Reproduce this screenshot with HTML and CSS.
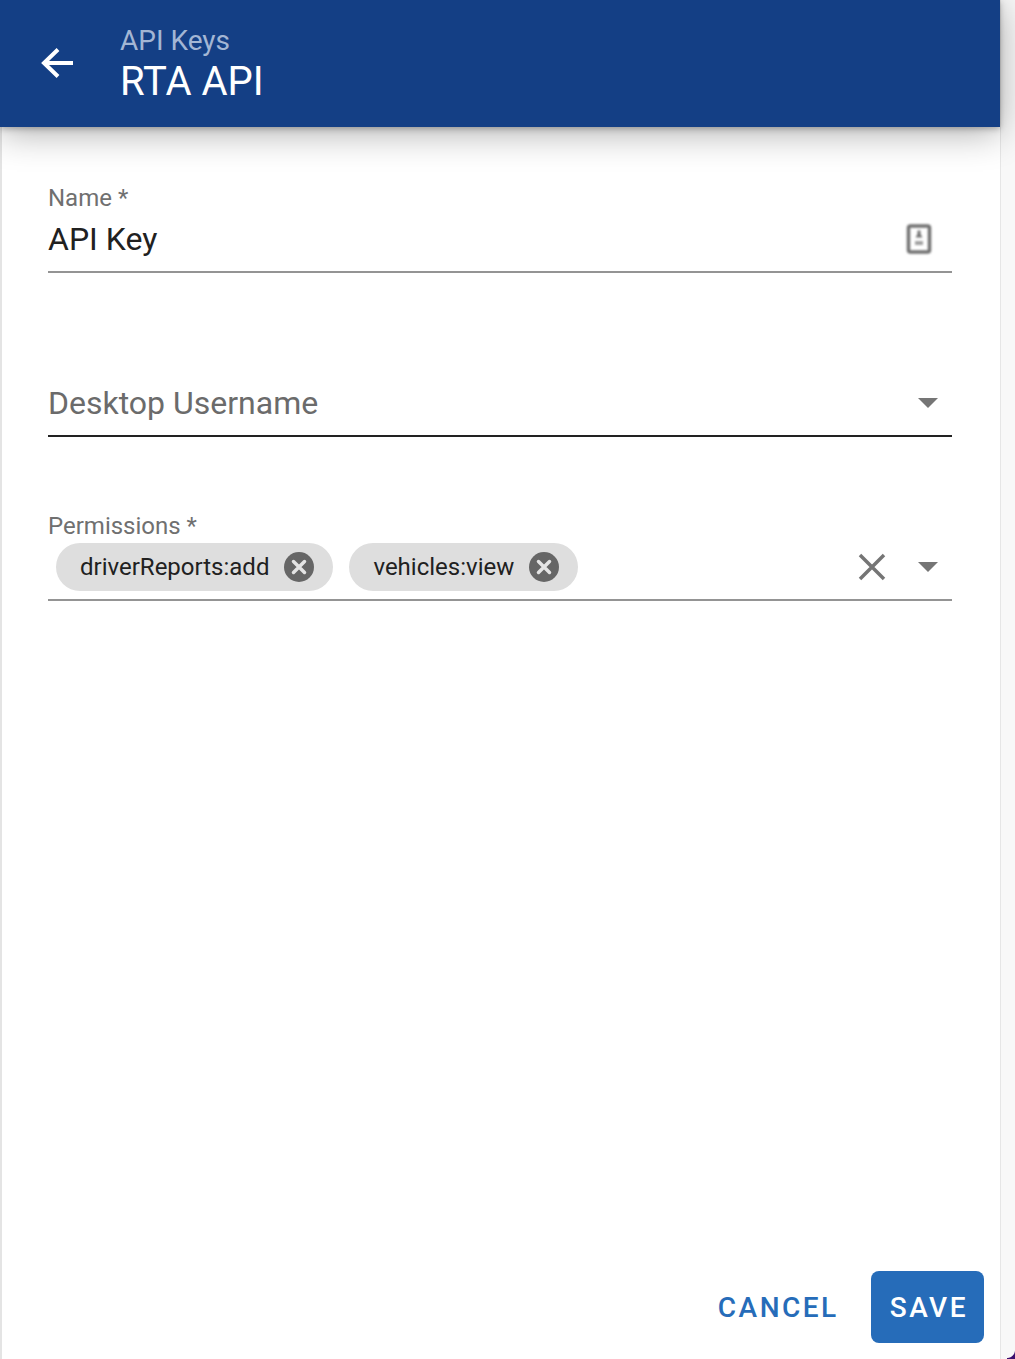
FILE: index.html
```html
<!DOCTYPE html>
<html lang="en">
<head>
    <meta charset="UTF-8">
    <meta name="viewport" content="width=device-width, initial-scale=1.0">
    <title>RTA API</title>
    <link rel="stylesheet" href="styles.css">
</head>
<body>
    <div class="page">
        <div class="panel">

            <!-- Header -->
            <header class="topbar">
                <svg class="back" width="48" height="48" viewBox="0 0 48 48">
                    <path d="M40 24H12M25 10.500L11 24l14 13.500" fill="none" stroke="#fff" stroke-width="4"/>
                </svg>
                <div class="titles">
                    <div class="crumb">API Keys</div>
                    <div class="title">RTA API</div>
                </div>
            </header>

            <!-- Form -->
            <main class="form">
                <div class="field field-name">
                    <label class="label">Name *</label>
                    <div class="control">
                        <span class="value">API Key</span>
                        <svg class="badge" width="26" height="32" viewBox="0 0 26 32">
                            <rect x="2.500" y="3" width="21" height="26" rx="2" fill="#fff" stroke="#707070" stroke-width="3.500"/>
                            <path d="M11.500 7.500h3V11l2 3.500h-7l2-3.500z" fill="#707070"/>
                            <rect x="9" y="18" width="8" height="4" fill="#a0a0a0"/>
                        </svg>
                    </div>
                </div>

                <div class="field field-user">
                    <div class="control control-focus">
                        <span class="placeholder">Desktop Username</span>
                        <span class="caret"></span>
                    </div>
                </div>

                <div class="field field-perms">
                    <label class="label">Permissions *</label>
                    <div class="control control-chips">
                        <span class="chip">driverReports:add
                            <svg class="chip-x" width="30" height="30" viewBox="0 0 30 30">
                                <circle cx="15" cy="15" r="15" fill="#666"/>
                                <path d="M9.500 9.500l11 11M20.500 9.500l-11 11" stroke="#e4e4e4" stroke-width="3.500" stroke-linecap="round"/>
                            </svg>
                        </span>
                        <span class="chip">vehicles:view
                            <svg class="chip-x" width="30" height="30" viewBox="0 0 30 30">
                                <circle cx="15" cy="15" r="15" fill="#666"/>
                                <path d="M9.500 9.500l11 11M20.500 9.500l-11 11" stroke="#e4e4e4" stroke-width="3.500" stroke-linecap="round"/>
                            </svg>
                        </span>
                        <svg class="clear" width="32" height="32" viewBox="0 0 32 32">
                            <path d="M4 4l24 24M28 4L4 28" stroke="#757575" stroke-width="3.500"/>
                        </svg>
                        <span class="caret"></span>
                    </div>
                </div>
            </main>

            <!-- Buttons -->
            <footer class="actions">
                <button class="btn btn-text">CANCEL</button>
                <button class="btn btn-save">SAVE</button>
            </footer>
        </div>
        <div class="corner"></div>
    </div>
</body>
</html>
```

FILE: styles.css
```css
* {
    box-sizing: border-box;
}

html, body {
    margin: 0;
    padding: 0;
}

body {
    font-family: Roboto, "Liberation Sans", sans-serif;
    background: #f8f8f8;
}

.page {
    position: relative;
    width: 1015px;
    height: 1359px;
    overflow: hidden;
}

.panel {
    width: 1001px;
    height: 1359px;
    background: #fff;
    border-left: 2px solid #e4e4e4;
    border-right: 1px solid #e6e6e6;
    display: flex;
    flex-direction: column;
}

/* Header */
.topbar {
    height: 127px;
    margin-left: -2px;
    flex-shrink: 0;
    background: #143f85;
    box-shadow: 0 6px 34px rgba(0, 0, 0, 0.32), 0 2px 6px rgba(0, 0, 0, 0.25);
    display: flex;
    align-items: center;
    padding-left: 33px;
    position: relative;
}

.back {
    margin-right: 39px;
    margin-bottom: 2px;
}

.titles {
    padding-top: 1px;
}

.crumb {
    font-size: 28px;
    line-height: 35px;
    color: #a3b6d4;
}

.title {
    font-size: 40px;
    line-height: 48px;
    color: #fff;
}

/* Form */
.form {
    flex: 1;
    padding: 0 48px 0 46px;
}

.field {
    display: flex;
    flex-direction: column;
}

.field-name {
    margin-top: 57px;
}

.field-user {
    margin-top: 98px;
}

.field-perms {
    margin-top: 75px;
}

.label {
    font-size: 24px;
    line-height: 28px;
    color: #707070;
}

.control {
    display: flex;
    align-items: center;
    height: 61px;
    border-bottom: 2px solid #949494;
    padding-bottom: 5px;
}

.control-focus {
    height: 66px;
    padding-bottom: 0;
    border-bottom-color: #222;
}

.control-chips {
    padding-left: 8px;
}

.value,
.placeholder {
    font-size: 32px;
    color: #212121;
}

.placeholder {
    color: #6b6b6b;
}

.badge {
    margin-left: auto;
    margin-right: 20px;
    filter: blur(1px);
}

.caret {
    width: 0;
    height: 0;
    border-left: 10px solid transparent;
    border-right: 10px solid transparent;
    border-top: 10px solid #757575;
    margin-right: 14px;
}

.control-focus .caret {
    margin-left: auto;
}

/* Chips */
.chip {
    display: flex;
    align-items: center;
    height: 48px;
    padding: 0 19px 0 24px;
    margin-right: 16px;
    border-radius: 24px;
    background: #dedede;
    font-size: 24px;
    color: #212121;
}

.chip-x {
    margin-left: 15px;
}

.clear {
    margin-left: auto;
    margin-right: 30px;
}

/* Buttons */
.actions {
    display: flex;
    justify-content: flex-end;
    align-items: center;
    gap: 16px;
    padding: 0 16px 16px 0;
}

.btn {
    height: 72px;
    padding: 0 16px 0 19px;
    border: none;
    border-radius: 8px;
    background: none;
    font-family: inherit;
    font-size: 28px;
    font-weight: 500;
    letter-spacing: 2.500px;
    color: #266cb9;
}

.btn-save {
    background: #266cb9;
    color: #fff;
}

/* Bout de fond violet dans le coin */
.corner {
    position: absolute;
    right: 0;
    bottom: 0;
    width: 8px;
    height: 9px;
    background: radial-gradient(circle at 0 0, #f8f8f8 7.500px, #3c0f6e 8.500px);
}
```
